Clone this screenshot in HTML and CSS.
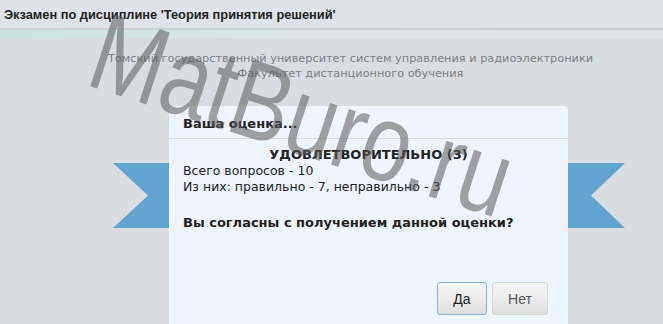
FILE: index.html
```html
<!DOCTYPE html>
<html lang="ru">
<head>
    <meta charset="UTF-8">
    <title>Экзамен</title>
    <link rel="stylesheet" href="styles.css">
</head>
<body>
<header class="topbar">
    <h1>Экзамен по дисциплине 'Теория принятия решений'</h1>
</header>
<div class="strip"></div>
<main class="page">
    <div class="university">
        <p class="univ-name">Томский государственный университет систем управления и радиоэлектроники</p>
        <p class="faculty">Факультет дистанционного обучения</p>
    </div>
    <div class="stage">
        <div class="ribbon ribbon-left"></div>
        <section class="dialog">
            <div class="dialog-title">Ваша оценка...</div>
            <div class="dialog-body">
                <div class="grade">УДОВЛЕТВОРИТЕЛЬНО (3)</div>
                <div>Всего вопросов - 10</div>
                <div>Из них: правильно - 7, неправильно - 3</div>
                <div class="question">Вы согласны с получением данной оценки?</div>
            </div>
            <div class="dialog-buttons">
                <button class="btn btn-yes">Да</button>
                <button class="btn btn-no">Нет</button>
            </div>
        </section>
        <div class="ribbon ribbon-right"></div>
    </div>
</main>
<div class="watermark">MatBuro.ru</div>
</body>
</html>
```

FILE: styles.css
```css
html, body {
    margin: 0;
    padding: 0;
    height: 100%;
    overflow: hidden;
}
body {
    background-color: #d9dde1;
    font-family: "DejaVu Sans", Tahoma, sans-serif;
    color: #222;
    position: relative;
}
.topbar {
    height: 28px;
    background-color: #dfe2e9;
    border-bottom: 2px solid #ccd0d6;
    display: flex;
    align-items: center;
    padding-left: 4px;
}
.topbar h1 {
    margin: 0;
    font-family: "Liberation Sans", Arial, sans-serif;
    font-size: 12.8px;
    font-weight: bold;
    color: #222;
}
.strip {
    height: 8px;
    background: linear-gradient(to right, #cde2e2 0%, #dde6e6 40%, #e2e5e8 100%);
}
.page {
    display: flex;
    flex-direction: column;
}
.university {
    padding-top: 13px;
    padding-left: 38px;
    text-align: center;
    color: #7b7e82;
    font-size: 11.3px;
    line-height: 15px;
}
.university p {
    margin: 0;
}
.stage {
    display: flex;
    align-items: flex-start;
    padding-top: 25px;
    padding-left: 113px;
}
.ribbon {
    height: 65px;
    margin-top: 57px;
    background-color: #60a4d0;
}
.ribbon-left {
    width: 56px;
    clip-path: polygon(0 0, 100% 0, 100% 100%, 0 100%, 35px 50%);
}
.ribbon-right {
    width: 57px;
    clip-path: polygon(0 0, 100% 0, 23px 50%, 100% 100%, 0 100%);
}
.dialog {
    width: 399px;
    height: 218px;
    background-color: #eef5fe;
    border-radius: 4px 4px 0 0;
    display: flex;
    flex-direction: column;
}
.dialog-title {
    font-weight: bold;
    font-size: 13px;
    padding: 10px 14px 7px;
    border-bottom: 1px solid #d6dce3;
    line-height: 15px;
}
.dialog-body {
    padding: 8px 14px 0;
    font-size: 12.5px;
    line-height: 16px;
}
.grade {
    font-weight: bold;
    font-size: 13px;
    text-align: center;
}
.question {
    margin-top: 20px;
    font-weight: bold;
    font-size: 13px;
}
.dialog-buttons {
    display: flex;
    justify-content: flex-end;
    gap: 5px;
    padding: 51px 20px 0 0;
}
.btn {
    height: 33px;
    font-family: "Liberation Sans", Arial, sans-serif;
    font-size: 14px;
    border-radius: 3px;
    background: linear-gradient(to bottom, #f5f5f5 0%, #ececec 50%, #dedede 100%);
}
.btn-yes {
    width: 50px;
    border: 1px solid #86b0e0;
    color: #222;
}
.btn-no {
    width: 56px;
    border: 1px solid #d6d6d6;
    color: #555;
}
.watermark {
    position: absolute;
    left: 112px;
    top: -4px;
    font-family: "Liberation Sans", Arial, sans-serif;
    font-size: 88px;
    line-height: 1;
    color: rgba(90, 90, 90, 0.55);
    transform: rotate(18deg) scaleY(1.25);
    transform-origin: left top;
    white-space: nowrap;
    pointer-events: none;
}
```
